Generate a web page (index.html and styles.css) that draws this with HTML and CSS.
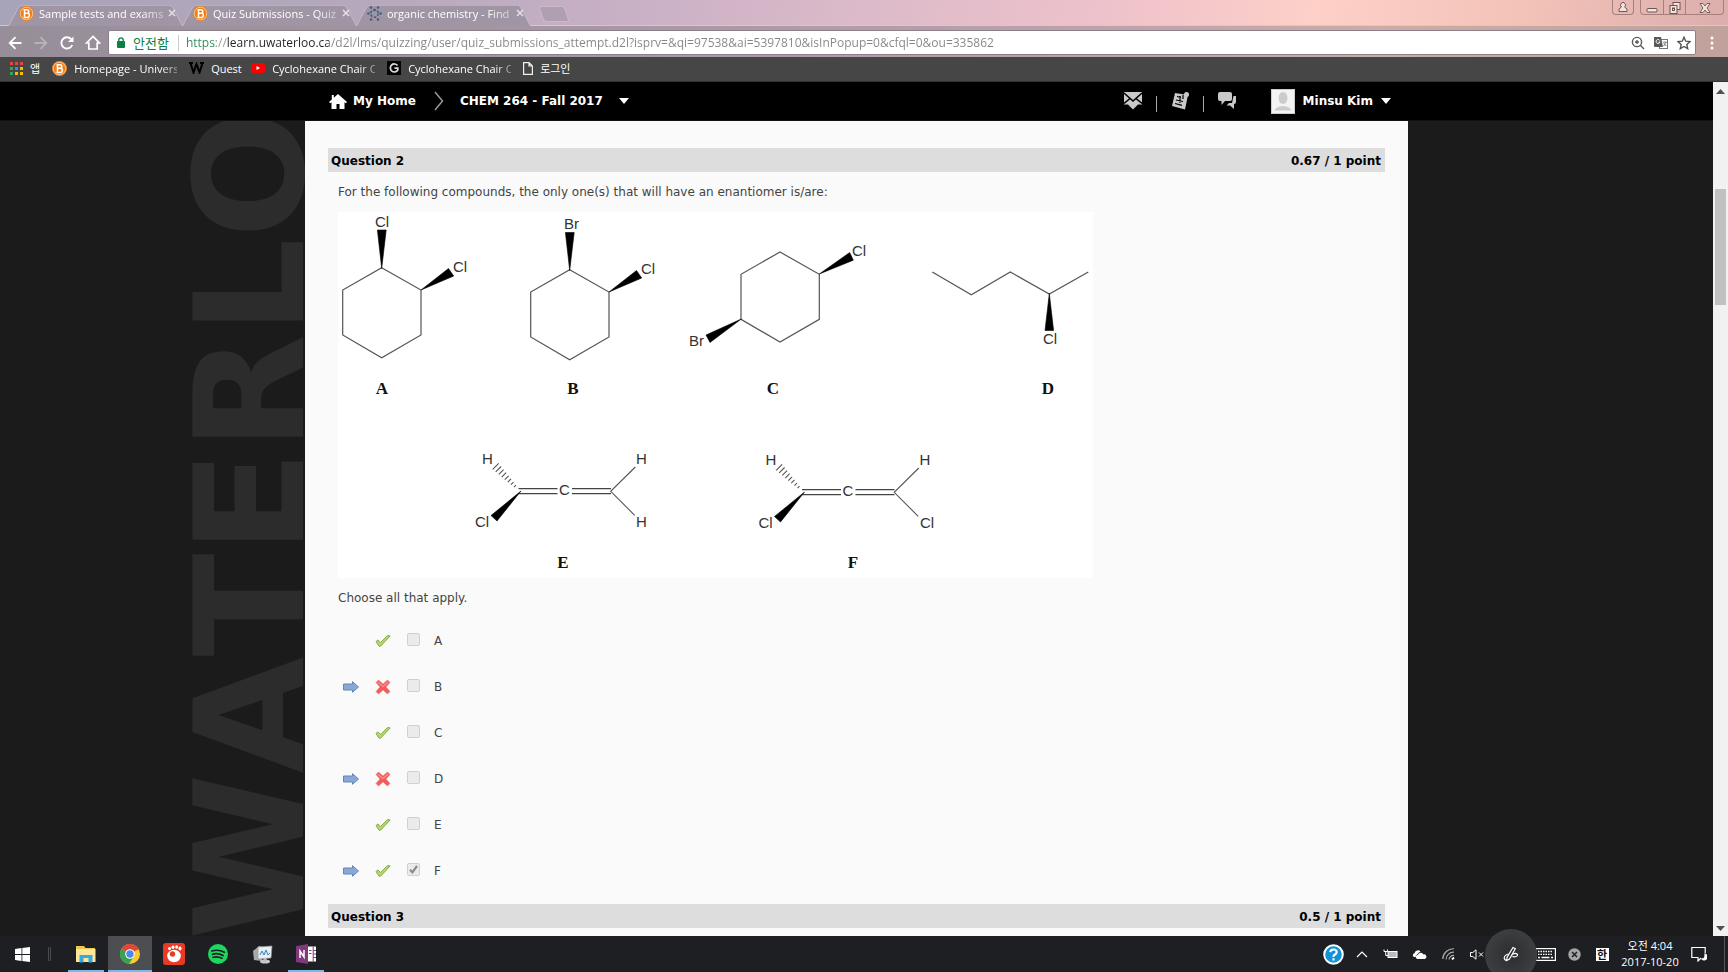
FILE: index.html
```html
<!DOCTYPE html>
<html lang="en">
<head>
<meta charset="utf-8">
<title>Quiz Submissions - Quiz</title>
<link rel="stylesheet" href="styles.css">
</head>
<body>
<svg width="0" height="0" class="defs" aria-hidden="true">
  <defs>
    <symbol id="bicon" viewBox="0 0 15 15">
      <circle cx="7.5" cy="7.5" r="7.5" fill="#ee7f1a"/>
      <circle cx="7.5" cy="7.5" r="6.3" fill="none" stroke="#fbd3a8" stroke-width=".8"/>
      <path d="M5.500 3v9M4.500 3.700h3.500a1.800 1.800 0 0 1 0 3.600H5.500h2.800a2.100 2.100 0 0 1 0 4.200H4.500" fill="none" stroke="#fff" stroke-width="1.500"/>
    </symbol>
    <symbol id="close" viewBox="0 0 8 8"><path d="M1 1l6 6M7 1L1 7" stroke="#e6e1e8" stroke-width="1.5"/></symbol>
    <symbol id="caret" viewBox="0 0 10 6"><path d="M0 0h10L5 6z" fill="#fff"/></symbol>
    <symbol id="tick" viewBox="0 0 16 14"><path d="M1 7.5l2-1.6 2.6 2.6L12.600 1.500l2.600.4-9.500 10.200-1.600.2z" fill="#b4d96b" stroke="#7fa23d" stroke-width=".9" stroke-linejoin="round"/></symbol>
    <symbol id="cross" viewBox="0 0 16 16"><path d="M1 3.500L3.500 1 8 5l4.500-4L15 3.500 11 8l4 4.500-2.500 2.500L8 11l-4.500 4L1 12.500 5 8z" fill="#f25a5c" stroke="#e88a8a" stroke-width=".8" stroke-linejoin="round"/><path d="M3 3.200L8 7.600l4.800-4.400" fill="none" stroke="#ff8d8d" stroke-width="1.300"/></symbol>
    <symbol id="arrow" viewBox="0 0 16 12"><path d="M.5 3h9V.7l6 5.300-6 5.300V9h-9z" fill="#88a9d8" stroke="#6685b4" stroke-width="1" stroke-linejoin="round"/></symbol>
  </defs>
</svg>

<header class="tabstrip">
  <nav class="tabs">
    <a class="tab" href="#t1"><svg class="fav"><use href="#bicon"/></svg><span class="tabtitle">Sample tests and exams</span><svg class="x"><use href="#close"/></svg></a>
    <a class="tab active" href="#t2"><svg class="fav"><use href="#bicon"/></svg><span class="tabtitle">Quiz Submissions - Quiz</span><svg class="x"><use href="#close"/></svg></a>
    <a class="tab" href="#t3"><svg class="fav" viewBox="0 0 15 15"><circle cx="7.500" cy="7.500" r="3.800" fill="none" stroke="#4d5b72" stroke-width="1.600" stroke-dasharray="2.500 1.500"/><g fill="#3f6088"><circle cx="7.500" cy="4" r="1.300"/><circle cx="4" cy="1.500" r="1.300"/><circle cx="11" cy="1.500" r="1.300"/><circle cx="1.400" cy="7.500" r="1.300"/><circle cx="13.600" cy="7.500" r="1.300"/><circle cx="4" cy="13.500" r="1.300"/><circle cx="11" cy="13.500" r="1.300"/></g></svg><span class="tabtitle">organic chemistry - Find</span><svg class="x"><use href="#close"/></svg></a>
    <button class="newtab" aria-label="New tab"></button>
  </nav>
  <div class="winbtns">
    <button class="user" aria-label="Profile"><svg width="12" height="12" viewBox="0 0 12 12"><path d="M2 10.500V8l2.500-2a2.500 2.500 0 1 1 3 0L10 8v2.500z" fill="#f5e3e0" stroke="#6d5552"/></svg></button>
    <div class="group">
      <button class="min" aria-label="Minimize"><svg width="12" height="12" viewBox="0 0 12 12"><rect x="1" y="6.500" width="10" height="3.500" rx="1" fill="#f5e3e0" stroke="#6d5552"/></svg></button>
      <button class="max" aria-label="Restore"><svg width="12" height="12" viewBox="0 0 12 12" fill="#f5e3e0" stroke="#6d5552"><rect x="4" y=".5" width="7" height="7"/><rect x="1" y="3.500" width="7" height="8"/><rect x="3.500" y="6" width="2" height="2.500"/></svg></button>
      <button class="cls" aria-label="Close"><svg width="12" height="12" viewBox="0 0 12 12"><path d="M1 1.500h3l2 2.500 2-2.500h3L8 6l3 4.500H8L6 8l-2 2.500H1L4 6z" fill="#f5e3e0" stroke="#6d5552" stroke-width=".9"/></svg></button>
    </div>
  </div>
</header>

<div class="toolbar">
  <button class="nav" aria-label="Back"><svg width="14" height="14" viewBox="0 0 14 14" fill="none" stroke="#fff" stroke-width="1.800"><path d="M13.500 7H2M7.500 1.200L1.700 7l5.800 5.800"/></svg></button>
  <button class="nav" aria-label="Forward" disabled><svg width="14" height="14" viewBox="0 0 14 14" fill="none" stroke="#b9b2bb" stroke-width="1.800"><path d="M.5 7H12M6.500 1.200L12.300 7l-5.800 5.800"/></svg></button>
  <button class="nav" aria-label="Reload"><svg width="14" height="14" viewBox="0 0 14 14"><path d="M12.200 9A5.600 5.600 0 1 1 11.200 3.200" fill="none" stroke="#fff" stroke-width="1.900"/><path d="M13.500.5v5.500H8z" fill="#fff"/></svg></button>
  <button class="nav" aria-label="Home"><svg width="16" height="15" viewBox="0 0 16 15" fill="none" stroke="#fff" stroke-width="1.700"><path d="M1.500 8L8 1.500 14.500 8h-2.300v6H3.800V8z"/></svg></button>
  <div class="omnibox">
    <svg width="8" height="11" viewBox="0 0 8 11"><rect y="4" width="8" height="7" rx=".8" fill="#0b8043"/><path d="M1.800 4.500V3a2.200 2.200 0 0 1 4.400 0v1.500" fill="none" stroke="#0b8043" stroke-width="1.300"/></svg>
    <span class="secure">안전함</span>
    <input class="url" type="text" aria-label="Address" value="https://learn.uwaterloo.ca/d2l/lms/quizzing/user/quiz_submissions_attempt.d2l?isprv=&amp;qi=97538&amp;ai=5397810&amp;isInPopup=0&amp;cfql=0&amp;ou=335862">
    <button aria-label="Zoom"><svg width="14" height="14" viewBox="0 0 14 14" fill="none" stroke="#5a5a5a" stroke-width="1.400"><circle cx="6" cy="6" r="4.600"/><path d="M9.300 9.300L13 13M6 4v4M4 6h4"/></svg></button>
    <button aria-label="Translate"><svg width="14" height="14" viewBox="0 0 14 14"><rect x="5.500" y="3.500" width="8" height="9" fill="#fff" stroke="#777"/><path d="M0 1h7l2 10H1a1 1 0 0 1-1-1z" fill="#5a5a5a"/><path d="M5.800 4.500A2 2 0 1 0 6 6H4.500" fill="none" stroke="#fff" stroke-width="1"/><path d="M9 6.200h4M11.800 6.500l-2.200 3.500M10 7.500l2.300 2.500" stroke="#777"/></svg></button>
    <button aria-label="Bookmark"><svg width="14" height="14" viewBox="0 0 14 14"><path d="M7 1.200l1.700 4 4.300.4-3.200 2.900.9 4.200L7 10.500l-3.700 2.200.9-4.200L1 5.600l4.300-.4z" fill="none" stroke="#555" stroke-width="1.400"/></svg></button>
  </div>
  <button class="menu" aria-label="Menu"><svg width="4" height="14" viewBox="0 0 4 14" fill="#fff"><circle cx="2" cy="2" r="1.500"/><circle cx="2" cy="7" r="1.500"/><circle cx="2" cy="12" r="1.500"/></svg></button>
</div>

<nav class="bookmarks">
  <a class="apps" href="#apps"><svg width="13" height="13" viewBox="0 0 13 13"><g fill="#e8453c"><path d="M0 0h3v3H0zM5 0h3v3H5zM10 0h3v3h-3z"/></g><path d="M0 5h3v3H0z" fill="#34a853"/><path d="M5 5h3v3H5z" fill="#4285f4"/><path d="M10 5h3v3h-3z" fill="#fbbc05"/><path d="M0 10h3v3H0z" fill="#34a853"/><path d="M5 10h3v3H5zM10 10h3v3h-3z" fill="#fbbc05"/></svg><span>앱</span></a>
  <a href="#b1"><svg class="fav"><use href="#bicon"/></svg><span class="fade">Homepage - Universi</span></a>
  <a href="#b2"><svg width="15" height="12" viewBox="0 0 15 12"><path d="M0 1h4M1.500 1l3 9.500L7.500 2l3 8.500 3-9.500M11 1h4" fill="none" stroke="#000" stroke-width="2"/></svg><span class="quest">Quest</span></a>
  <a href="#b3"><svg width="14" height="10" viewBox="0 0 14 10"><rect width="14" height="10" rx="2.500" fill="#f00"/><path d="M5.500 3v4L9 5z" fill="#fff"/></svg><span class="fade">Cyclohexane Chair Co</span></a>
  <a href="#b4"><svg width="14" height="14" viewBox="0 0 14 14"><rect width="14" height="14" fill="#050505"/><path d="M10.500 4.500A4 4 0 1 0 10.800 9V7.200H7.500" fill="none" stroke="#ddd" stroke-width="1.700"/></svg><span class="fade">Cyclohexane Chair Co</span></a>
  <a class="file" href="#b5"><svg width="10" height="13" viewBox="0 0 10 13"><path d="M.6.600h5.400L9.400 4v8.400H.6zM6 .6V4h3.400" fill="none" stroke="#f0f0f0" stroke-width="1.200"/></svg><span>로그인</span></a>
</nav>

<div class="view">
  <div class="page">
    <div class="minibar">
      <div class="inner">
        <a href="#home" class="home"><svg width="18" height="15" viewBox="0 0 18 15"><path d="M9 0l9 8-1.200 1.300-1.300-1V15h-5v-5h-3v5h-5V8.300l-1.300 1L0 8l2.800-2.500V1h2v2.700z" fill="#fff"/></svg>My Home</a>
        <svg class="chev" width="10" height="20" viewBox="0 0 10 20"><path d="M1 1l7.500 9L1 19" fill="none" stroke="#999" stroke-width="1.500"/></svg>
        <a href="#course" class="course">CHEM 264 - Fall 2017<svg class="caret"><use href="#caret"/></svg></a>
        <div class="alerts">
          <button aria-label="Messages"><svg width="18" height="18" viewBox="0 0 18 18"><path d="M0 0h18v12.500h-4L9 17.500l-5-5H0z" fill="#c9c9c9"/><path d="M0 1l9 8 9-8M0 11.500L6 6.500M18 11.500l-6-5" fill="none" stroke="#000" stroke-width="1.600"/></svg></button>
          <i></i>
          <button aria-label="Subscriptions"><svg width="18" height="18" viewBox="0 0 18 18"><path d="M4 1l13 2-3 14.500L1 14z" fill="#c9c9c9"/><circle cx="15.500" cy="2.500" r="2.500" fill="#c9c9c9"/><path d="M6 4.500l4 1M5 8l7 1.500M4 11.500l7 1.800M12 3v4M9 4v7" fill="none" stroke="#000" stroke-width="1.200"/></svg></button>
          <i></i>
          <button aria-label="Updates"><svg width="18" height="18" viewBox="0 0 18 18"><path d="M2 0h10a2 2 0 0 1 2 2v5a2 2 0 0 1-2 2H7l-3.500 4V9H2a2 2 0 0 1-2-2V2a2 2 0 0 1 2-2z" fill="#c9c9c9"/><path d="M15.500 4H18v6a2 2 0 0 1-2 2v5l-4-3.500H8.500L11 11h3z" fill="#c9c9c9"/></svg></button>
        </div>
        <a href="#me" class="me"><svg width="24" height="25" viewBox="0 0 24 25"><rect width="24" height="25" fill="#f3f3f3"/><rect x=".5" y=".5" width="23" height="24" fill="none" stroke="#ccc"/><ellipse cx="12" cy="9" rx="4.500" ry="6" fill="#ccc"/><path d="M3.500 21.500q1-4 8.500-4.500 7.500.5 8.500 4.500z" fill="#ccc"/></svg>Minsu Kim<svg class="caret"><use href="#caret"/></svg></a>
      </div>
    </div>
    <main class="panel">
      <svg class="mark" width="125" height="815" aria-hidden="true"><text transform="translate(123 819) rotate(-90)">WATERLO</text></svg>
      <section>
        <div class="qbar"><h2>Question 2</h2><span>0.67 / 1 point</span></div>
        <div class="qbody">
          <p>For the following compounds, the only one(s) that will have an enantiomer is/are:</p>
          <svg class="figure" viewBox="338 212 755 366" role="img" aria-label="Compounds A to F">
            <rect x="338" y="212" width="755" height="366" fill="#fff"/>
            <g fill="none" stroke="#555" stroke-width="1.200">
              <path id="ring" d="M381.700 267.700L421 290v45l-39.300 22.700L342.700 335v-45z"/>
              <use href="#ring" x="188" y="2"/>
              <use href="#ring" x="398.300" y="-15.700"/>
              <path d="M932.300 272l39 22.700 39-22.700 39 22 39-22"/>
            </g>
            <path d="M381.700 268.500L377.400 230h8.800zM421 290l27.500-21.500 5.200 7.500zM569.700 270.500L565.400 232.500h8.800zM609 292l27.500-21.500 5.200 7.500zM819.300 274l30.400-21.500 3.600 7.700zM741.300 319L706 335l4 7.500zM1049.300 293.500L1045 330.500h8.600z" fill="#000" stroke="#000" stroke-width=".6"/>
            <g id="allene">
              <path d="M518.500 488.700h39M518.500 493.700h39M572 488.700h39M572 493.700h39" fill="none" stroke="#444" stroke-width="1.200"/>
              <path d="M635.300 467l-24.600 24.300 24 24M492.700 469.300l6-6M495.700 471.900l5.400-5.400M498.800 474.400l4.800-4.800M501.700 477.100l4.400-4.400M504.800 479.600l3.800-3.800M507.800 482.100l3.200-3.200M510.900 484.700l2.600-2.600M514 487.200l2-2" fill="none" stroke="#555" stroke-width="1.100"/>
              <path d="M521 491l-30 24.500 6 5.500z" fill="#000" stroke="#000" stroke-width=".6"/>
              <g class="atom"><text x="482" y="464">H</text><text x="475" y="527">Cl</text><text x="559" y="495">C</text><text x="636" y="464">H</text></g>
            </g>
            <use href="#allene" x="283.500" y="1"/>
            <g class="atom">
              <text x="375" y="227">Cl</text><text x="453" y="272">Cl</text><text x="564" y="229">Br</text><text x="641" y="274">Cl</text>
              <text x="852" y="256">Cl</text><text x="689" y="346">Br</text><text x="1043" y="344">Cl</text><text x="636" y="527">H</text><text x="920" y="528">Cl</text>
            </g>
            <g class="cap"><text x="382" y="394">A</text><text x="573" y="394">B</text><text x="773" y="394">C</text><text x="1048" y="394">D</text><text x="563" y="568">E</text><text x="853" y="568">F</text></g>
          </svg>
          <p>Choose all that apply.</p>
          <ul class="answers">
            <li><span></span><svg class="tick"><use href="#tick"/></svg><input type="checkbox" id="a" disabled><label for="a">A</label></li>
            <li><svg class="arrow"><use href="#arrow"/></svg><svg class="cross"><use href="#cross"/></svg><input type="checkbox" id="b" disabled><label for="b">B</label></li>
            <li><span></span><svg class="tick"><use href="#tick"/></svg><input type="checkbox" id="c" disabled><label for="c">C</label></li>
            <li><svg class="arrow"><use href="#arrow"/></svg><svg class="cross"><use href="#cross"/></svg><input type="checkbox" id="d" disabled><label for="d">D</label></li>
            <li><span></span><svg class="tick"><use href="#tick"/></svg><input type="checkbox" id="e" disabled><label for="e">E</label></li>
            <li><svg class="arrow"><use href="#arrow"/></svg><svg class="tick"><use href="#tick"/></svg><span class="chk"><input type="checkbox" id="f" checked disabled><svg width="9" height="9" viewBox="0 0 9 9"><path d="M1 4.800l2.400 2.500L8 1" fill="none" stroke="#8a8a8a" stroke-width="2.200"/></svg></span><label for="f">F</label></li>
          </ul>
        </div>
      </section>
      <section>
        <div class="qbar"><h2>Question 3</h2><span>0.5 / 1 point</span></div>
      </section>
    </main>
  </div>
  <div class="scroll">
    <svg width="9" height="5" viewBox="0 0 9 5"><path d="M0 5h9L4.500 0z" fill="#505050"/></svg>
    <div class="track"><div class="thumb"></div></div>
    <svg width="9" height="5" viewBox="0 0 9 5"><path d="M0 0h9L4.500 5z" fill="#505050"/></svg>
  </div>
</div>

<footer class="taskbar">
  <button class="app start" aria-label="Start"><svg width="15" height="15" viewBox="0 0 15 15" fill="#fff"><path d="M0 2l6.500-1v6H0zM7.300.9L15 0v7H7.300zM0 8h6.500v6L0 13zM7.300 8H15v7l-7.700-1z"/></svg></button>
  <span class="grip"></span>
  <button class="app open" aria-label="File Explorer"><svg width="20" height="17" viewBox="0 0 20 17"><path d="M0 0h8l1.500 2H19v14H0z" fill="#f0c64c"/><path d="M0 3h19.500v13H0z" fill="#fde79b"/><path d="M3.500 9h13v7.500h-4V12h-5v4.500h-4z" fill="#35a9e0"/></svg></button>
  <button class="app open current" aria-label="Chrome"><svg width="20" height="20" viewBox="0 0 20 20"><circle cx="10" cy="10" r="10" fill="#fbc931"/><path d="M10 10L1.300 5A10 10 0 0 1 18.700 5z" fill="#d9483b"/><path d="M10 10l0 0L1.300 5a10 10 0 0 0 7.700 15l5-8z" fill="#35a353"/><path d="M10 5h8.700" stroke="#d9483b"/><circle cx="10" cy="10" r="4.800" fill="#fff"/><circle cx="10" cy="10" r="3.700" fill="#4a87ee"/></svg></button>
  <button class="app" aria-label="GOM Player"><svg width="22" height="22" viewBox="0 0 22 22"><rect width="22" height="22" rx="3" fill="#e93a25"/><ellipse cx="11" cy="13" rx="6.800" ry="6.200" fill="#fff"/><circle cx="9.500" cy="11" r="2.700" fill="#e93a25"/><g fill="#fff"><ellipse cx="6.500" cy="5.500" rx="1.500" ry="1.500"/><ellipse cx="10" cy="4.200" rx="1.500" ry="1.700"/><ellipse cx="13.700" cy="4" rx="1.500" ry="1.800"/><ellipse cx="17" cy="5.500" rx="1.500" ry="2"/></g></svg></button>
  <button class="app" aria-label="Spotify"><svg width="20" height="20" viewBox="0 0 20 20"><circle cx="10" cy="10" r="10" fill="#1ed760"/><path d="M3.800 7q6.500-2 12.600 1.300M4.500 10.300q5.500-1.600 10.600 1.200M5 13.300q4.700-1.300 9 1" fill="none" stroke="#1b1d1f" stroke-width="1.700" stroke-linecap="round"/></svg></button>
  <button class="app" aria-label="Resource Monitor"><svg width="21" height="19" viewBox="0 0 21 19"><path d="M1 6l6-5 4 1-1 14-8-1z" fill="#a9a9a9"/><path d="M6 2l14-1-1 12-13 1z" fill="#e8eef2" stroke="#999" stroke-width=".7"/><path d="M8 10l2-4 2 4 2-5 2 5 2-2" fill="none" stroke="#3380bf"/><ellipse cx="13" cy="16.500" rx="5" ry="2" fill="#c7c7c7"/><path d="M11.500 13h3v3h-3z" fill="#bbb"/></svg></button>
  <button class="app open" aria-label="OneNote"><svg width="21" height="20" viewBox="0 0 21 20"><path d="M11 2.500h9v15h-9z" fill="#fff"/><path d="M17.200 2.500v15M17.200 6.500H20M17.200 10H20M17.200 13.500H20M13 6.500h2.500M13 9.500h2.500" stroke="#80397b"/><path d="M0 2l12-2v20L0 18z" fill="#80397b"/><path d="M4 14V7l4 6V6" fill="none" stroke="#fff" stroke-width="1.500"/></svg></button>
  <div class="tray">
    <button class="m" aria-label="Help"><svg width="21" height="21" viewBox="0 0 21 21"><circle cx="10.500" cy="10.500" r="9.300" fill="#1492d8" stroke="#fff" stroke-width="2"/><path d="M7.300 8.200q.2-2.700 3.200-2.700t3.200 2.500q0 1.500-1.700 2.500t-1.500 2.300M10.500 14.200v2.300" fill="none" stroke="#fff" stroke-width="2.200"/></svg></button>
    <button class="s" aria-label="Hidden icons"><svg width="12" height="7" viewBox="0 0 12 7"><path d="M1 6l5-5 5 5" fill="none" stroke="#fff" stroke-width="1.200"/></svg></button>
    <button class="s" aria-label="Battery"><svg width="15" height="10" viewBox="0 0 15 10"><rect x="5" y="2.500" width="9" height="6" fill="#bbb" stroke="#fff"/><path d="M1 .5v2h3.500v-2M2.700 3v3.500H5" fill="none" stroke="#fff"/></svg></button>
    <button class="m" aria-label="OneDrive"><svg width="15" height="9" viewBox="0 0 15 9"><path d="M2 7a2 2 0 0 1 .5-3.800A3.300 3.300 0 0 1 8.500 1.800Q6 2.500 5.500 4.300 3.500 5 3.500 7z" fill="#fff"/><path d="M5.500 9a2 2 0 0 1 .3-4A3 3 0 0 1 11.500 4.500 2.300 2.300 0 0 1 12.700 9z" fill="#fff"/></svg></button>
    <button class="s" aria-label="Network"><svg width="13" height="12" viewBox="0 0 13 12" fill="none" stroke="#aaa" stroke-width="1.200"><path d="M.8 11A10.500 10.500 0 0 1 12 .800M4 11.500A7.500 7.500 0 0 1 12 4.200M7 11.500a5 5 0 0 1 5-4.200"/><path d="M10 11.500l2-2" stroke="#fff" stroke-width="1.800"/></svg></button>
    <button class="m" aria-label="Volume muted"><svg width="14" height="11" viewBox="0 0 14 11" fill="none" stroke="#fff"><path d="M.5 3.500h2.300L6 .8v9.400L2.800 7.500H.5zM9 3.500l4 4M13 3.500l-4 4"/></svg></button>
    <button class="l pen" aria-label="Pen workspace"><svg width="16" height="16" viewBox="0 0 16 16" fill="none" stroke="#fff" stroke-width="1.200"><path d="M7.500 5.500L10 1.500l2.300 1.300L6.500 13l-2.800 1.500.3-3z"/><path d="M5.500 8Q1.500 9 1.200 12q.3 2.500 3 2.300M9.500 8.500q3-2 4.500-.5t-1 2.500-3.500-.5"/></svg></button>
    <button class="m" aria-label="Touch keyboard"><svg width="21" height="13" viewBox="0 0 21 13"><rect x=".6" y=".6" width="19.800" height="11.800" fill="none" stroke="#fff" stroke-width="1.200"/><path d="M3 3.500h15M3 6.300h15" stroke="#fff" stroke-width="1.300" stroke-dasharray="1.500 1"/><path d="M3 9.500h2M6.500 9.500h8M16 9.500h2" stroke="#fff" stroke-width="1.300"/></svg></button>
    <button class="s" aria-label="Defender"><svg width="13" height="13" viewBox="0 0 13 13"><circle cx="6.500" cy="6.500" r="6.200" fill="#a5a5a5"/><path d="M4 4l5 5M9 4L4 9" stroke="#1d1f21" stroke-width="1.500"/></svg></button>
    <button class="s"><span class="ime">한</span></button>
    <button class="clock"><span>오전 4:04</span><span>2017-10-20</span></button>
    <button class="m" aria-label="Notifications"><svg width="16" height="16" viewBox="0 0 16 16" fill="none" stroke="#fff" stroke-width="1.200"><path d="M7.500 11.500H.8v-10h13.400V7M7 11.500V15l3-3"/><path d="M14 8a3 3 0 1 1-3 5q3.500 0 3-5z" fill="#fff"/></svg></button>
    <span class="peek"></span>
  </div>
</footer>
</body>
</html>
```

FILE: styles.css
```css
* { box-sizing: border-box; }
body {
  margin: 0;
  height: 100vh;
  display: flex;
  flex-direction: column;
  overflow: hidden;
  background: #1b1b1b;
  font-family: "Open Sans", "Noto Sans CJK KR", sans-serif;
  font-size: 11px;
}
a { color: inherit; text-decoration: none; }
button { border: 0; padding: 0; background: none; color: inherit; font: inherit; display: flex; align-items: center; justify-content: center; }
svg { display: block; flex: none; }
.defs { position: absolute; }
.fav { width: 15px; height: 15px; }

/* Tab strip */
.tabstrip {
  flex: none;
  height: 26px;
  display: flex;
  justify-content: space-between;
  border-bottom: 1px solid #d9c6d0;
  background: linear-gradient(100deg, #a7a3b8 0, #b5a8bc 20%, #c8b0c5 36%, #dcbac9 50%, #eec2cb 64%, #fdd0c8 76%, #f3c3b8 88%, #dbaead 100%);
}
.tabs { display: flex; padding-left: 5px; }
.tab {
  position: relative;
  width: 174px;
  height: 26px;
  padding: 0 3px 0 14px;
  display: flex;
  align-items: center;
  color: #fff;
}
.tab::before {
  content: "";
  position: absolute;
  inset: 1px -4px 0 3px;
  background: #a095a5;
  border: 1px solid #c3b8c6;
  border-bottom: 0;
  border-radius: 3px 3px 0 0;
  transform: perspective(40px) rotateX(14deg);
  transform-origin: bottom;
}
.tab > * { position: relative; }
.tabtitle {
  flex: 1;
  margin: 0 2px 0 5px;
  white-space: nowrap;
  mask-image: linear-gradient(90deg, #000 80%, #0006 100%);
}
.x { width: 8px; height: 8px; }
.newtab { width: 26px; height: 16px; margin: 6px 0 0 14px; border: 1px solid #c9bac9; border-radius: 3px; background: #b09fb0; transform: skewX(20deg); }
.winbtns { display: flex; gap: 6px; padding-right: 4px; height: 15px; }
.winbtns button { height: 15px; }
.user, .group { border: 1px solid #a5807d; border-top: 0; border-radius: 0 0 4px 4px; }
.winbtns .user { width: 22px; border: 1px solid #a5807d; border-top: 0; }
.group { display: flex; }
.min { width: 22px; }
.winbtns .max { width: 23px; border: solid #a5807d; border-width: 0 1px; }
.cls { width: 37px; }

/* Toolbar */
.toolbar {
  flex: none;
  height: 31px;
  padding: 4px 5px 2px 2px;
  display: flex;
  align-items: center;
  background: linear-gradient(90deg, #978e9a, #a797a5 36%, #bda2a9 64%, #cdaca6 80%, #c1a19b);
}
.nav { width: 26px; height: 24px; }
.omnibox {
  flex: 1;
  height: 25px;
  margin-left: 2px;
  padding: 0 0 0 8px;
  display: flex;
  align-items: center;
  background: #fff;
  border: 1px solid #8b7f8a;
  border-radius: 2px;
}
.omnibox button { width: 23px; height: 20px; }
.secure { margin-left: 8px; padding-right: 9px; font-size: 13px; line-height: 16px; color: #0b8043; border-right: 1px solid #ccc; }
.url {
  flex: 1;
  min-width: 0;
  padding: 0 0 0 7px;
  border: 0;
  outline: 0;
  font: 12px "Open Sans", sans-serif;
  color: transparent;
  background: linear-gradient(90deg, #2b8a57 0 37px, #999 37px 48px, #222 48px 150px, #858585 150px);
  -webkit-background-clip: text;
  background-clip: text;
}
.menu { width: 22px; height: 24px; margin-left: 5px; }

/* Bookmarks */
.bookmarks {
  flex: none;
  height: 25px;
  display: flex;
  align-items: center;
  padding: 0 10px 2px;
  gap: 12px;
  color: #fff;
  background: #464646;
  border-bottom: 1px solid #333;
}
.bookmarks a { display: flex; align-items: center; gap: 7px; }
.fade { width: 103px; white-space: nowrap; mask-image: linear-gradient(90deg, #000 84%, #0006); }
.quest { width: 28px; }

/* Page */
.view { flex: 1; min-height: 0; display: flex; }
.page { flex: 1; min-width: 0; overflow: hidden; font-family: "DejaVu Sans", sans-serif; font-size: 12px; color: #444; }
.minibar { height: 39px; background: #000; color: #fff; font-weight: bold; border-bottom: 1px solid #111; }
.inner { max-width: 1103px; height: 38px; margin: 0 auto; padding: 0 17px 0 24px; display: flex; align-items: center; }
.inner a { display: flex; align-items: center; }
.home { gap: 6px; }
.chev { margin: 0 16px 0 18px; }
.caret { width: 10px; height: 6px; margin-left: 8px; }
.course .caret { margin-left: 16px; }
.alerts { margin-left: auto; display: flex; align-items: center; gap: 14px; }
.alerts i { width: 1px; height: 16px; margin-top: 6px; background: #aaa; }
.me { margin-left: 35px; }
.me svg:first-child { margin-right: 8px; }
.panel { position: relative; max-width: 1103px; min-height: 100%; margin: 0 auto; padding: 27px 23px 0; background: #fafafa; }
.mark { position: absolute; top: 0; right: 100%; }
.mark text { font: bold 151px "DejaVu Sans", sans-serif; font-kerning: none; fill: #2c2c2c; }
.qbar { height: 24px; padding: 1px 4px 0 3px; display: flex; align-items: center; justify-content: space-between; background: #ddd; color: #000; font-weight: bold; }
.qbar h2 { margin: 0; font-size: 12px; }
.qbody { padding: 10px; display: flex; flex-direction: column; gap: 10px; }
.qbody p { margin: 0; padding-top: 1px; line-height: 19px; }
.figure { width: 100%; max-width: 755px; }
.atom { font: 15px "Liberation Sans", sans-serif; fill: #333; }
.cap { font: bold 17px "Liberation Serif", serif; fill: #111; text-anchor: middle; }
.answers { margin: 0; padding: 0 0 0 5px; list-style: none; }
.answers li { height: 46px; display: grid; grid-template-columns: 32px 32px 27px auto; align-items: center; justify-content: start; }
.arrow { width: 16px; height: 12px; }
.tick { width: 16px; height: 14px; }
.cross { width: 16px; height: 16px; }
.answers input { appearance: none; display: block; width: 13px; height: 13px; margin: 0 0 3px; border: 1px solid #d0d0d0; border-radius: 2px; background: #ebebeb; }
.chk { position: relative; }
.chk svg { position: absolute; left: 2px; top: 2px; }

.scroll { width: 15px; padding: 7px 2px 5px; display: flex; flex-direction: column; align-items: center; background: #f1f1f1; }
.track { flex: 1; align-self: stretch; }
.thumb { height: 14%; margin-top: 95px; background: #c1c1c1; }

/* Taskbar */
.taskbar { flex: none; height: 36px; display: flex; background: #1d1f22; color: #fff; }
.app { position: relative; width: 44px; height: 36px; }
.grip { width: 3px; height: 14px; margin: 11px 13px 0 4px; border: solid #4a4c4e; border-width: 0 1px; }
.open::after { content: ""; position: absolute; left: 4px; right: 4px; bottom: 0; height: 2px; background: #76b9ed; }
.current { background: #4c4e51; }
.current::after { left: 0; right: 0; }
.tray { margin-left: auto; display: flex; }
.tray button { height: 36px; }
.s { width: 28px; }
.m { width: 30px; }
.l { width: 38px; }
.pen { position: relative; z-index: 1; }
.pen::before { content: ""; position: absolute; width: 52px; height: 52px; left: -7px; top: -7px; border-radius: 50%; background: radial-gradient(circle, #303234 20%, #444648 100%); clip-path: inset(0 0 9px); }
.pen svg { position: relative; }
.ime { width: 13px; height: 13px; background: #fff; color: #111; font-size: 11px; line-height: 13px; font-weight: bold; }
.clock { width: 68px; flex-direction: column; line-height: 16px; }
.peek { width: 4px; margin-left: 10px; border-left: 1px solid #555; }
```
